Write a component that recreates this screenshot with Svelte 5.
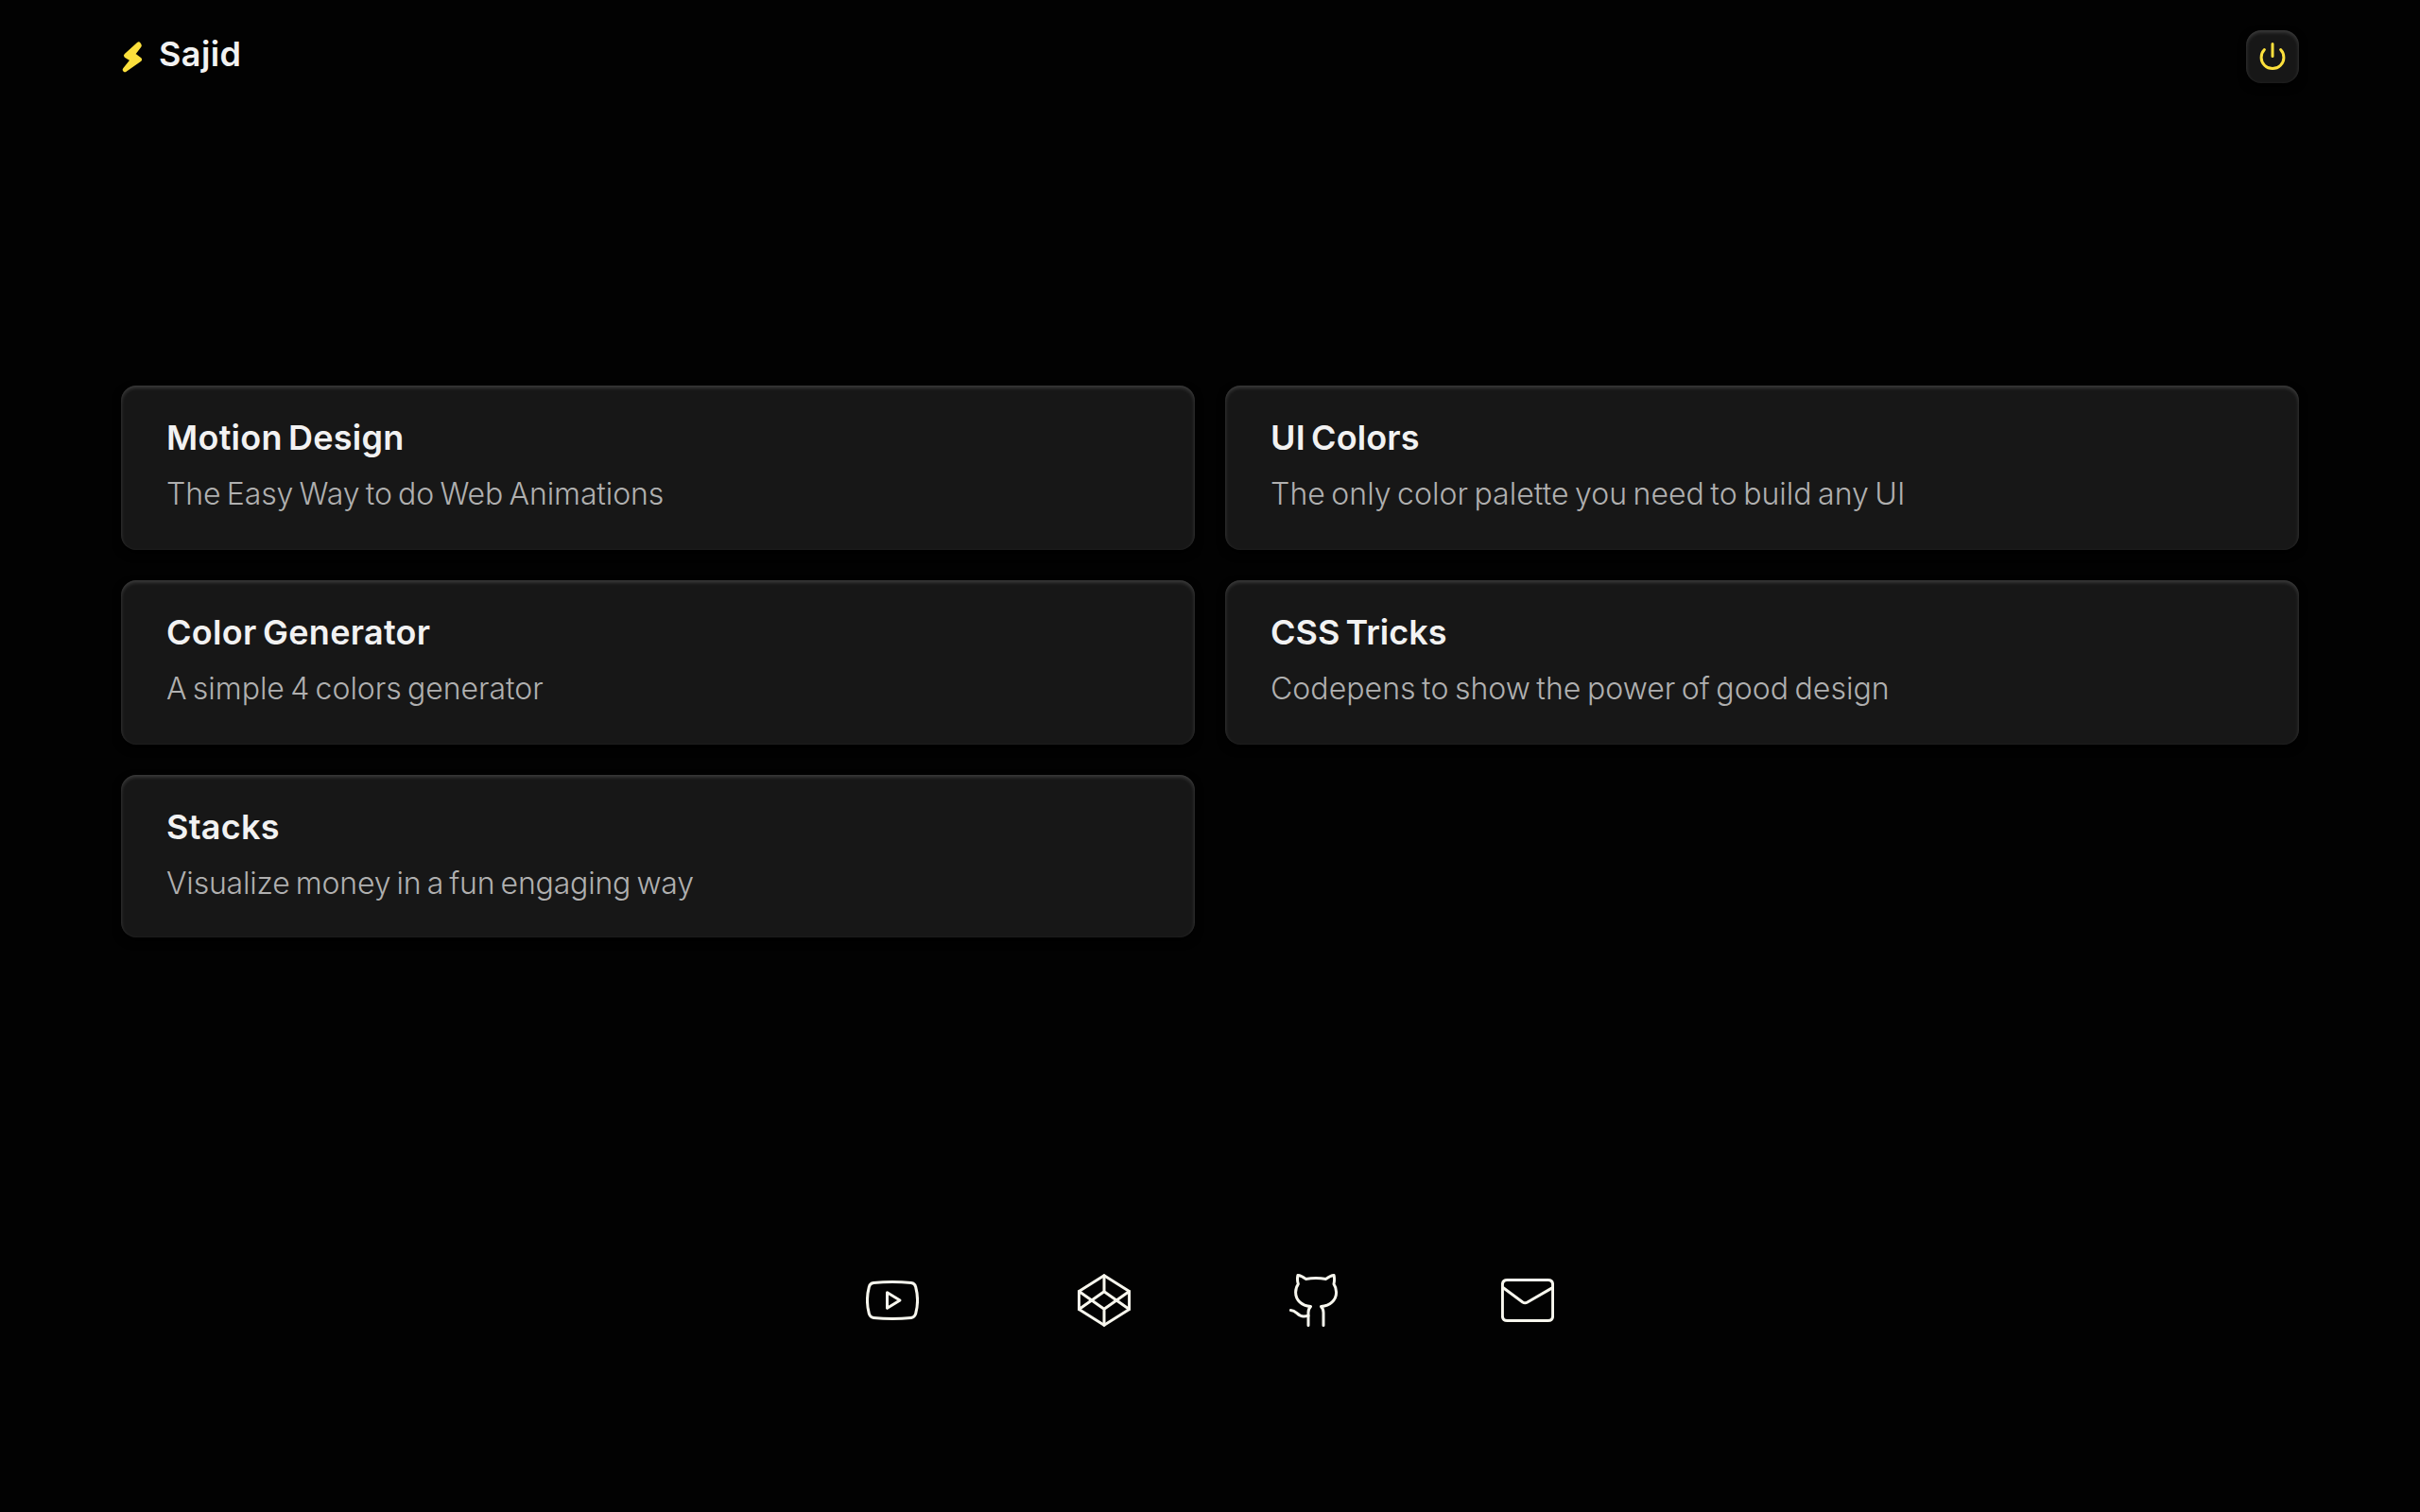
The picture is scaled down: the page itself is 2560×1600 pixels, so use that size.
<script>
  // titleTrack and textTrack are letter-spacing values in px
  const projects = [
    { title: 'Motion Design', titleTrack: 0.25, text: 'The Easy Way to do Web Animations', textTrack: -0.1 },
    { title: 'UI Colors', titleTrack: 0.15, text: 'The only color palette you need to build any UI', textTrack: 0.04 },
    { title: 'Color Generator', titleTrack: 0.3, text: 'A simple 4 colors generator', textTrack: -0.04 },
    { title: 'CSS Tricks', titleTrack: 0, text: 'Codepens to show the power of good design', textTrack: 0.05 },
    { title: 'Stacks', titleTrack: 0.27, text: 'Visualize money in a fun engaging way', textTrack: -0.19 }
  ];
  const links = [
    {
      name: 'YouTube',
      paths: [
        'M8 9.6Q28 7.3 48 9.6Q51.8 10.1 52.7 14Q56.4 28 52.7 42Q51.8 45.9 48 46.4Q28 48.7 8 46.4Q4.2 45.9 3.3 42Q-.4 28 3.3 14Q4.2 10.1 8 9.6Z',
        'M22.5 19.7L36 28L22.5 36.3Z'
      ]
    },
    {
      name: 'CodePen',
      paths: [
        'M28 1.7L54.6 18.5V37.5L28 54.3L1.4 37.5V18.5Z',
        'M1.4 18.5L28 37.2L54.6 18.5M1.4 37.5L28 18.8L54.6 37.5M28 1.7V18.8M28 37.2V54.3'
      ]
    },
    {
      name: 'GitHub',
      paths: [
        'M20 54.5V41C20 38 21 36 22.5 34.6C13 33.5 6.6 28 6.6 19.5C6.6 16 7.5 13.2 9.3 10.8C8.3 7.5 8.3 4 8.9 1.5C12 1.7 15 3.6 17.3 5.4C24 4.2 32 4.2 38.7 5.4C41 3.6 44 1.7 47.1 1.5C47.7 4 47.7 7.5 47 10.8C48.7 13.2 49.6 16 49.6 19.5C49.6 28 43 33.5 33.5 34.6C35 36 36 38 36 41V54.5',
        'M1.4 38.5C8 38.5 8 45 15 45C17 45 18.5 44.7 20 44.2'
      ]
    },
    {
      name: 'Mail',
      paths: [
        'M6.4 6.4H49.6Q54.6 6.4 54.6 11.4V44.6Q54.6 49.6 49.6 49.6H6.4Q1.4 49.6 1.4 44.6V11.4Q1.4 6.4 6.4 6.4Z',
        'M1.6 14.3L22.8 30Q25.2 31.6 27.8 30L54.4 14.6'
      ]
    }
  ];
</script>

<div class="page">
  <header>
    <a class="brand" href="#home">
      <svg class="bolt" viewBox="0 0 20 32" aria-hidden="true">
        <path d="M16.5 3L3.5 14.8L10.6 19.2L2.2 29.8L17.5 19L10.2 13.6L17.3 4.2Z" />
      </svg>
      <span>Sajid</span>
    </a>
    <button class="power" aria-label="Toggle theme">
      <svg viewBox="0 0 56 56" aria-hidden="true">
        <path d="M28 14.4V27.5M19.4 20.5A11.9 11.9 0 1 0 36.6 20.5" />
      </svg>
    </button>
  </header>

  <main>
    {#each projects as p}
      <a class="card" href="#project">
        <h2 style:letter-spacing="{p.titleTrack}px">{p.title}</h2>
        <p style:letter-spacing="{p.textTrack}px">{p.text}</p>
      </a>
    {/each}
  </main>

  <footer>
    {#each links as l}
      <a class="social" href="#social" aria-label={l.name}>
        <svg viewBox="0 0 56 56" aria-hidden="true">
          {#each l.paths as d}<path {d} />{/each}
        </svg>
      </a>
    {/each}
  </footer>
</div>

<style>
  :global(body) {
    margin: 0;
    background: #020202;
  }
  .page {
    box-sizing: border-box;
    height: 1600px;
    display: flex;
    flex-direction: column;
    padding: 32px 128px 196px;
    color: #f2f2f2;
    font-family: Inter, 'Liberation Sans', sans-serif;
  }
  a {
    color: inherit;
    text-decoration: none;
  }
  header {
    display: flex;
    justify-content: space-between;
    align-items: center;
    height: 56px;
  }
  .brand {
    display: flex;
    align-items: center;
    gap: 18px;
    padding-left: 2px;
    font-size: 36px;
    font-weight: 600;
    letter-spacing: 0.4px;
    line-height: 48px;
  }
  .brand span {
    padding-bottom: 7px;
  }
  .bolt {
    width: 20px;
    height: 32px;
    fill: #fce03c;
    stroke: #fce03c;
    stroke-width: 5;
    stroke-linejoin: round;
    overflow: visible;
  }
  .power {
    width: 56px;
    height: 56px;
    padding: 0;
    border: 0;
    border-radius: 16px;
    background: #171717;
    box-shadow: inset 0 2px 4px rgba(255, 255, 255, 0.18), 0 4px 8px #000;
  }
  .power svg {
    display: block;
    fill: none;
    stroke: #fce03c;
    stroke-width: 3;
    stroke-linecap: round;
  }
  main {
    display: grid;
    grid-template-columns: 1fr 1fr;
    grid-template-rows: 174px 174px 172px;
    gap: 32px;
    margin-top: 320px;
  }
  .card {
    box-sizing: border-box;
    padding: 32px 48px;
    border-radius: 16px;
    background: #171717;
    box-shadow: inset 0 2px 4px rgba(255, 255, 255, 0.18), 0 4px 8px #000;
    white-space: nowrap;
  }
  h2 {
    margin: 0;
    font-size: 36px;
    font-weight: 600;
    line-height: 46px;
    word-spacing: -3px;
  }
  p {
    margin: 11px 0 0;
    color: #b0b0b0;
    font-size: 32px;
    font-weight: 300;
    line-height: 52px;
    word-spacing: -2.6px;
  }
  footer {
    display: flex;
    justify-content: center;
    gap: 168px;
    margin-top: auto;
  }
  .social {
    width: 56px;
    height: 56px;
  }
  .social svg {
    display: block;
    fill: none;
    stroke: #f8f7ee;
    stroke-width: 3;
    stroke-linecap: round;
    stroke-linejoin: round;
  }
</style>
